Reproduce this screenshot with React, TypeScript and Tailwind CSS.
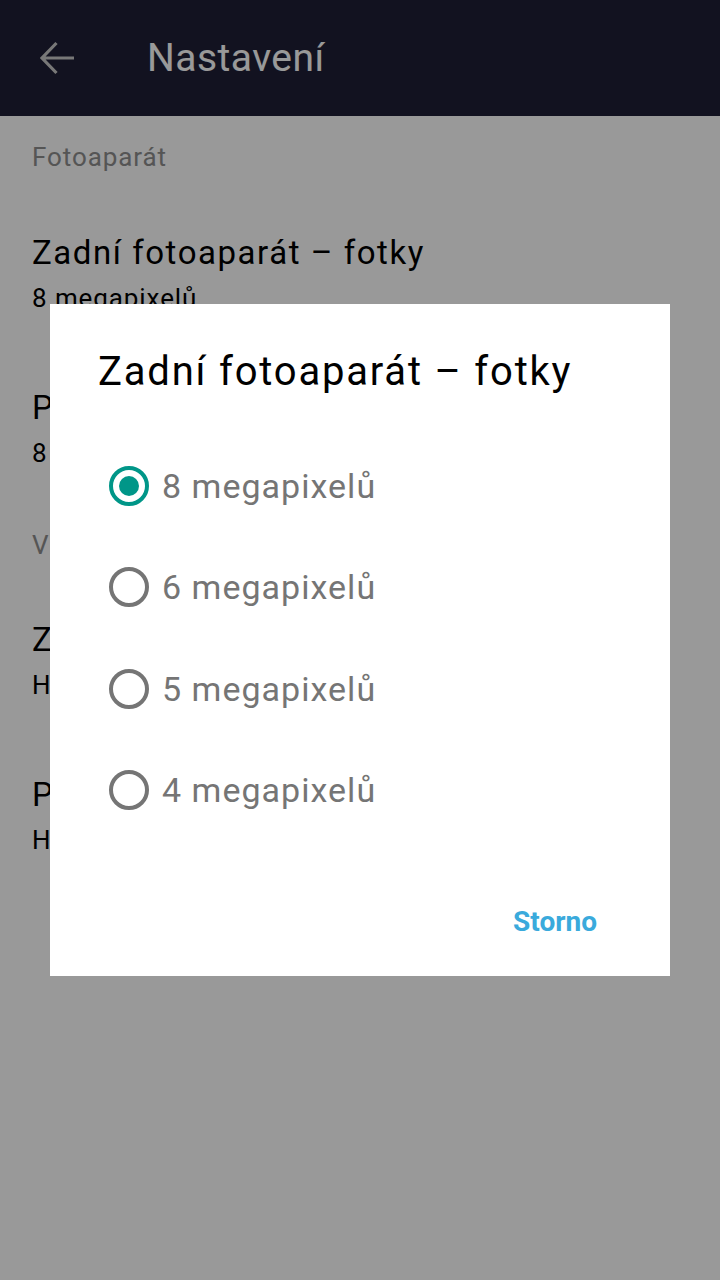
import { useState } from 'react';

const font = { fontFamily: 'Roboto, "Noto Sans", sans-serif' };

const options = ['8 megapixelů', '6 megapixelů', '5 megapixelů', '4 megapixelů'];

function SettingItem({ title, value }: { title: string; value: string }) {
  return (
    <div className="flex h-[155px] flex-col justify-center px-8">
      <div className="h-[40px] text-[33px] leading-[40px] tracking-[0.047em] text-black">{title}</div>
      <div className="mt-[9px] h-[32px] text-[26px] leading-[32px] tracking-[0.035em] text-black">{value}</div>
    </div>
  );
}

function Radio({ checked }: { checked: boolean }) {
  return (
    <div
      className={
        checked
          ? 'flex h-[40px] w-[40px] items-center justify-center rounded-full border-4 border-[#009688]'
          : 'flex h-[40px] w-[40px] items-center justify-center rounded-full border-4 border-[#757575]'
      }
    >
      {checked && <div className="h-[20px] w-[20px] rounded-full bg-[#009688]" />}
    </div>
  );
}

export default function App() {
  const [selected, setSelected] = useState(0);

  return (
    <div className="relative h-[1280px] w-[720px] overflow-hidden bg-white" style={font}>
      {/* settings page underneath */}
      <header className="flex h-[116px] items-center bg-[#1f1f36]">
        <div className="ml-[39px] flex h-[36px] w-[38px] items-center">
          <svg width="36" height="34" viewBox="0 0 36 34" fill="none">
            <path d="M17.5 2 L3 17 L17.5 32 M3.5 17 H35" stroke="#c8c8c8" strokeWidth="3.2" />
          </svg>
        </div>
        <h1 className="ml-[70px] text-[39px] font-normal tracking-[0.012em] text-white">Nastavení</h1>
      </header>

      <div className="h-[80px] px-8 pt-[25px] text-[26px] leading-[32px] tracking-[0.035em] text-[#8e8e8e]">
        Fotoaparát
      </div>
      <SettingItem title="Zadní fotoaparát – fotky" value="8 megapixelů" />
      <SettingItem title="Přední fotoaparát – fotky" value="8 megapixelů" />
      <div className="h-[77px] px-8 pt-[23px] text-[26px] leading-[32px] tracking-[0.035em] text-[#8e8e8e]">
        Video
      </div>
      <SettingItem title="Zadní fotoaparát – video" value="HD 1080p" />
      <SettingItem title="Přední fotoaparát – video" value="HD 720p" />

      {/* dim layer + dialog */}
      <div className="absolute inset-0 flex items-center justify-center bg-black/40">
        <div className="flex h-[672px] w-[620px] flex-col bg-white">
          <h2 className="pl-[48px] pt-[44px] text-[40px] leading-[48px] font-normal tracking-[0.045em] text-black">
            Zadní fotoaparát – fotky
          </h2>
          <div className="mt-[39px] flex flex-col">
            {options.map((opt, i) => (
              <button
                key={opt}
                onClick={() => setSelected(i)}
                className="flex h-[101.5px] items-center gap-[13px] pl-[59px] text-left"
              >
                <Radio checked={selected === i} />
                <span className="text-[34px] leading-[40px] tracking-[0.03em] text-[#757575]">{opt}</span>
              </button>
            ))}
          </div>
          <div className="mt-[53px] flex justify-end pr-[73px]">
            <button className="h-[56px] text-[28px] font-bold text-[#3aaadc]">Storno</button>
          </div>
        </div>
      </div>
    </div>
  );
}
